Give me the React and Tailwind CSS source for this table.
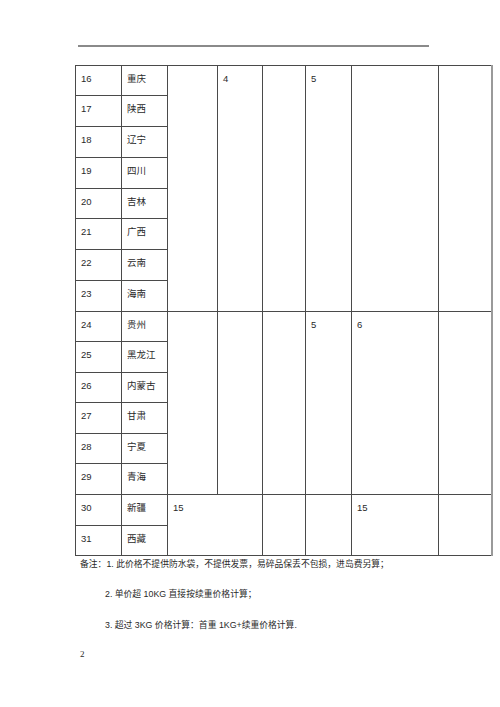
import React from "react";

const font = { fontFamily: '"Liberation Sans", "Noto Sans CJK SC", sans-serif' };

const g1 = [["16","重庆"],["17","陕西"],["18","辽宁"],["19","四川"],["20","吉林"],["21","广西"],["22","云南"],["23","海南"]];
const g2 = [["24","贵州"],["25","黑龙江"],["26","内蒙古"],["27","甘肃"],["28","宁夏"],["29","青海"]];
const g3 = [["30","新疆"],["31","西藏"]];

const td = "border border-[#4a4a4a] align-top px-[5px] pt-[7px] text-[9.5px] leading-[11px] text-[#2a2a2a]";

export default function App() {
  return (
    <div className="w-[500px] h-[707px] bg-white flex flex-col" style={font}>
      <div className="mt-[45px] ml-[78px] w-[351px] h-[1.5px] bg-[#8a8a8a]" />
      <table className="mt-[18px] ml-[75px] w-[416px] table-fixed border-collapse border-r-2 border-r-[#9a9a9a]">
        <colgroup>
          <col className="w-[46px]" />
          <col className="w-[46px]" />
          <col className="w-[50px]" />
          <col className="w-[45px]" />
          <col className="w-[43px]" />
          <col className="w-[46px]" />
          <col className="w-[87px]" />
          <col className="w-[53px]" />
        </colgroup>
        <tbody>
          {g1.map(([n, p], i) => (
            <tr key={n} className="h-[30.75px]">
              <td className={td}>{n}</td>
              <td className={td}>{p}</td>
              {i === 0 && (
                <>
                  <td className={td} rowSpan={8}></td>
                  <td className={td} rowSpan={8}>4</td>
                  <td className={td} rowSpan={8}></td>
                  <td className={td} rowSpan={8}>5</td>
                  <td className={td} rowSpan={8}></td>
                  <td className={td + " border-r-2 border-r-[#9a9a9a]"} rowSpan={8}></td>
                </>
              )}
            </tr>
          ))}
          {g2.map(([n, p], i) => (
            <tr key={n} className="h-[30.6px]">
              <td className={td}>{n}</td>
              <td className={td}>{p}</td>
              {i === 0 && (
                <>
                  <td className={td} rowSpan={6}></td>
                  <td className={td} rowSpan={6}></td>
                  <td className={td} rowSpan={6}></td>
                  <td className={td} rowSpan={6}>5</td>
                  <td className={td} rowSpan={6}>6</td>
                  <td className={td + " border-r-2 border-r-[#9a9a9a]"} rowSpan={6}></td>
                </>
              )}
            </tr>
          ))}
          {g3.map(([n, p], i) => (
            <tr key={n} className="h-[30.5px]">
              <td className={td}>{n}</td>
              <td className={td}>{p}</td>
              {i === 0 && (
                <>
                  <td className={td} rowSpan={2} colSpan={2}>15</td>
                  <td className={td} rowSpan={2}></td>
                  <td className={td} rowSpan={2}></td>
                  <td className={td} rowSpan={2}>15</td>
                  <td className={td + " border-r-2 border-r-[#9a9a9a]"} rowSpan={2}></td>
                </>
              )}
            </tr>
          ))}
        </tbody>
      </table>
      <div className="text-[8.8px] leading-[11px] text-[#2a2a2a]">
        <div className="mt-[3px] ml-[80px] whitespace-nowrap">备注：1. 此价格不提供防水袋，不提供发票，易碎品保丢不包损，进岛费另算；</div>
        <div className="mt-[19px] ml-[105px] whitespace-nowrap">2. 单价超 10KG 直接按续重价格计算；</div>
        <div className="mt-[20px] ml-[105px] whitespace-nowrap">3. 超过 3KG 价格计算：首重 1KG+续重价格计算.</div>
        <div className="mt-[18px] ml-[80px] text-[9px]" style={{ fontFamily: '"Liberation Serif", serif' }}>2</div>
      </div>
    </div>
  );
}
